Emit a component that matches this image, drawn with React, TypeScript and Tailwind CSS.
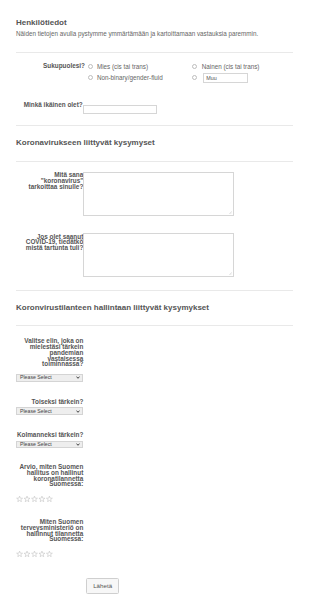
import React from "react";

const labelCls =
  "w-[67.3px] shrink-0 text-right text-[6.4px] leading-[5.7px] font-bold text-[#555]";

function Divider({ className }: { className: string }) {
  return <div className={"h-px bg-[#e9e9e9] " + className} />;
}

function Radio() {
  return (
    <span className="w-[5px] h-[5px] shrink-0 rounded-full border border-[#bdbdbd] bg-white" />
  );
}

function SelectBox({ className }: { className: string }) {
  return (
    <div
      className={
        "w-[67.3px] h-[7.6px] bg-[#eeeeee] border border-[#d4d4d4] flex items-center justify-between pl-[3px] pr-[2px] " +
        className
      }
    >
      <span className="text-[5.2px] leading-[5px] text-[#444]">Please Select</span>
      <svg width="4" height="3" viewBox="0 0 4 3">
        <path d="M0.5 0.6 L2 2.3 L3.5 0.6" fill="none" stroke="#333" strokeWidth="0.9" />
      </svg>
    </div>
  );
}

function Stars({ className }: { className: string }) {
  const pts = (cx: number) => {
    const out: string[] = [];
    for (let i = 0; i < 10; i++) {
      const r = i % 2 === 0 ? 3.1 : 1.3;
      const a = -Math.PI / 2 + (i * Math.PI) / 5;
      out.push(`${(cx + r * Math.cos(a)).toFixed(2)},${(3.2 + r * Math.sin(a)).toFixed(2)}`);
    }
    return out.join(" ");
  };
  return (
    <svg className={className} width="37.3" height="6" viewBox="0 0 37.3 6">
      {[0, 1, 2, 3, 4].map((i) => (
        <polygon key={i} points={pts(3.6 + i * 7.45)} fill="none" stroke="#c4c4c4" strokeWidth="0.6" />
      ))}
    </svg>
  );
}

function TextArea({ h }: { h: string }) {
  return (
    <div className={"relative w-[151px] border border-[#d6d6d6] bg-white " + h}>
      <svg className="absolute right-[1px] bottom-[1px]" width="3" height="3" viewBox="0 0 3 3">
        <path d="M0.3 2.8 L2.8 0.3 M1.5 2.8 L2.8 1.5" stroke="#b8b8b8" strokeWidth="0.4" />
      </svg>
    </div>
  );
}

export default function App() {
  return (
    <div className="w-[310px] h-[611px] bg-white font-['Liberation_Sans',Arial,sans-serif] overflow-hidden">
      <div className="pl-[16px] pr-[17px] pt-[18px] flex flex-col">
        <h1 className="text-[8px] leading-[10px] font-bold text-[#555]">Henkilötiedot</h1>
        <p className="mt-[1.8px] text-[6.3px] leading-[8px] text-[#666]">
          Näiden tietojen avulla pystymme ymmärtämään ja kartoittamaan vastauksia paremmin.
        </p>
        <Divider className="mt-[14.5px]" />

        {/* Sukupuolesi */}
        <div className="mt-[8.2px] flex">
          <div className="w-[69px] shrink-0 text-right text-[6.4px] leading-[10.5px] font-bold text-[#555]">
            Sukupuolesi?
          </div>
          <div className="ml-[2.5px] grid grid-cols-[104.5px_1fr] text-[6.3px] text-[#666]">
            <div className="h-[10.5px] flex items-center gap-[4.4px]">
              <Radio />
              <span>Mies (cis tai trans)</span>
            </div>
            <div className="h-[10.5px] flex items-center gap-[4.7px]">
              <Radio />
              <span>Nainen (cis tai trans)</span>
            </div>
            <div className="h-[10.5px] flex items-center gap-[4.4px]">
              <Radio />
              <span>Non-binary/gender-fluid</span>
            </div>
            <div className="h-[10.5px] flex items-center gap-[5.7px] pt-[1.5px]">
              <Radio />
              <div className="w-[45.6px] h-[9.3px] border border-[#d6d6d6] bg-white flex items-center pl-[2.5px] text-[5.4px] text-[#555]">
                Muu
              </div>
            </div>
          </div>
        </div>

        {/* Age */}
        <div className="mt-[18.8px] flex items-start">
          <div className="w-[66.7px] shrink-0 text-right text-[6.4px] leading-[7px] font-bold text-[#555]">
            Minkä ikäinen olet?
          </div>
          <div className="ml-[0.6px] mt-[3.7px] w-[73.4px] h-[9.3px] border border-[#d6d6d6] bg-white" />
        </div>

        <Divider className="mt-[11px]" />
        <h2 className="mt-[11.6px] text-[8px] leading-[10px] font-bold text-[#555]">
          Koronavirukseen liittyvät kysymyset
        </h2>
        <Divider className="mt-[12.8px]" />

        <div className="mt-[10px] flex items-start">
          <div className={labelCls + " mt-[0.5px]"}>
            Mitä sana
            <br />
            "koronavirus"
            <br />
            tarkoittaa sinulle?
          </div>
          <TextArea h="h-[44.3px]" />
        </div>
        <div className="mt-[17.3px] flex items-start">
          <div className={labelCls + " mt-[0.5px]"}>
            Jos olet saanut
            <br />
            COVID-19, tiedätkö
            <br />
            mistä tartunta tuli?
          </div>
          <TextArea h="h-[44px]" />
        </div>

        <Divider className="mt-[13.1px]" />
        <h2 className="mt-[11.3px] text-[8px] leading-[10px] font-bold text-[#555]">
          Koronvirustilanteen hallintaan liittyvät kysymykset
        </h2>
        <Divider className="mt-[12.3px]" />

        <div className={labelCls + " mt-[12.5px]"}>
          Valitse elin, joka on
          <br />
          mielestäsi tärkein
          <br />
          pandemian
          <br />
          vastaisessa
          <br />
          toiminnassa?
        </div>
        <SelectBox className="mt-[7px]" />

        <div className={labelCls + " mt-[17px]"}>Toiseksi tärkein?</div>
        <SelectBox className="mt-[3.2px]" />

        <div className={labelCls + " mt-[16.9px]"}>Kolmanneksi tärkein?</div>
        <SelectBox className="mt-[3.1px]" />

        <div className={labelCls + " mt-[15.9px]"}>
          Arvio, miten Suomen
          <br />
          hallitus on hallinut
          <br />
          koronatilannetta
          <br />
          Suomessa:
        </div>
        <Stars className="mt-[8.7px] block" />

        <div className={labelCls + " mt-[17.5px]"}>
          Miten Suomen
          <br />
          terveysministeriö on
          <br />
          hallinnut tilannetta
          <br />
          Suomessa:
        </div>
        <Stars className="mt-[8.7px] block" />

        <div className="mt-[21.3px] ml-[70px]">
          <button className="w-[33.3px] h-[16px] border border-[#cfcfcf] rounded-[1.5px] bg-[#f7f7f7] text-[6.2px] text-[#555] flex items-center justify-center">
            Lähetä
          </button>
        </div>
      </div>
    </div>
  );
}
